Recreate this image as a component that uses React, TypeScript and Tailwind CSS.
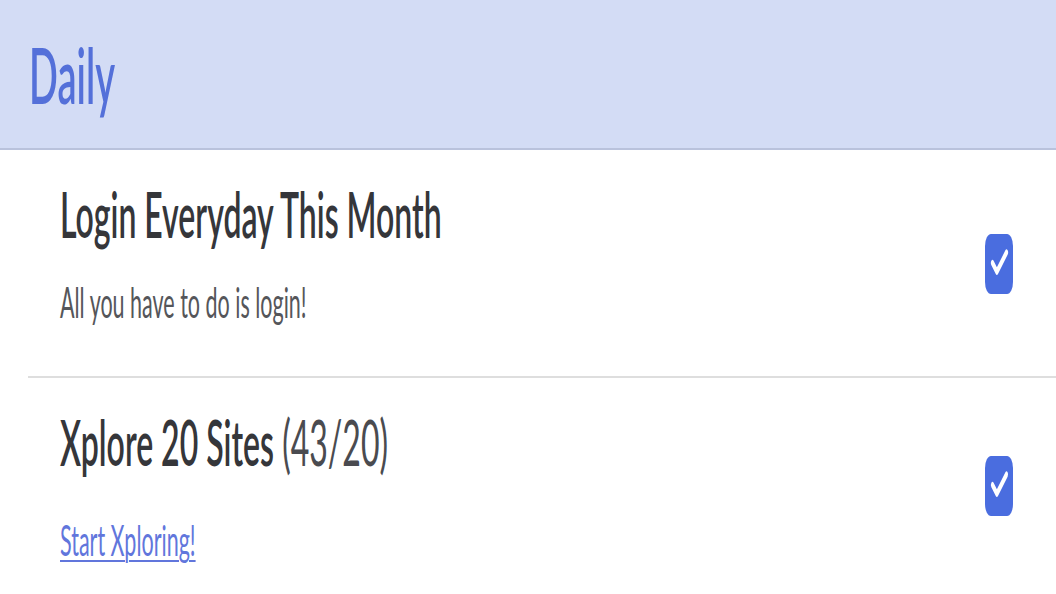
import { Check } from 'lucide-react';

type Task = {
  id: number;
  title: string;
  progress?: string;
  subtitle: string;
  isLink?: boolean;
  done: boolean;
};

const tasks: Task[] = [
  {
    id: 1,
    title: 'Login Everyday This Month',
    subtitle: 'All you have to do is login!',
    done: true,
  },
  {
    id: 2,
    title: 'Xplore 20 Sites',
    progress: '(43/20)',
    subtitle: 'Start Xploring!',
    isLink: true,
    done: true,
  },
];

const Checkbox = ({ checked }: { checked: boolean }) => (
  <div className="flex h-[30px] w-[28px] shrink-0 items-center justify-center rounded-[6px] bg-[#4a6ddf]">
    {checked && <Check className="h-[21px] w-[21px] text-white" strokeWidth={3.6} />}
  </div>
);

export default function App() {
  return (
    <div className="h-[594px] w-[1056px] overflow-hidden bg-white">
      {/* the reference is stretched vertically, so the page is drawn at half height and scaled */}
      <div
        className="h-[297px] w-full origin-top scale-y-200"
        style={{ fontFamily: 'Lato, "Noto Sans", sans-serif' }}
      >
        <div className="flex h-[75px] items-center border-b border-[#b9c2dc] bg-[#d3dcf5] pl-[29px]">
          <h1 className="text-[38px] font-semibold leading-none text-[#5470d9]">Daily</h1>
        </div>

        <div className="ml-[28px]">
          {tasks.map((task, i) => (
            <div
              key={task.id}
              className={
                i === 0
                  ? 'flex h-[114px] items-center justify-between border-b border-[#dedede] pl-[32px] pr-[43px]'
                  : 'flex h-[107px] items-center justify-between pl-[32px] pr-[43px]'
              }
            >
              <div className="flex h-full flex-col pt-[16px]">
                <h3 className="text-[32px] font-semibold leading-none text-[#35363a]">
                  {task.title}
                  {task.progress && (
                    <span className="font-normal text-[#4a4b50]"> {task.progress}</span>
                  )}
                </h3>
                {task.isLink ? (
                  <a
                    href="#"
                    className="mt-[23px] text-[21.5px] leading-none text-[#6176dc] underline decoration-[0.75px] underline-offset-[2px]"
                  >
                    {task.subtitle}
                  </a>
                ) : (
                  <p className="mt-[18px] text-[21.5px] leading-none text-[#55565a]">
                    {task.subtitle}
                  </p>
                )}
              </div>
              <Checkbox checked={task.done} />
            </div>
          ))}
        </div>
      </div>
    </div>
  );
}
